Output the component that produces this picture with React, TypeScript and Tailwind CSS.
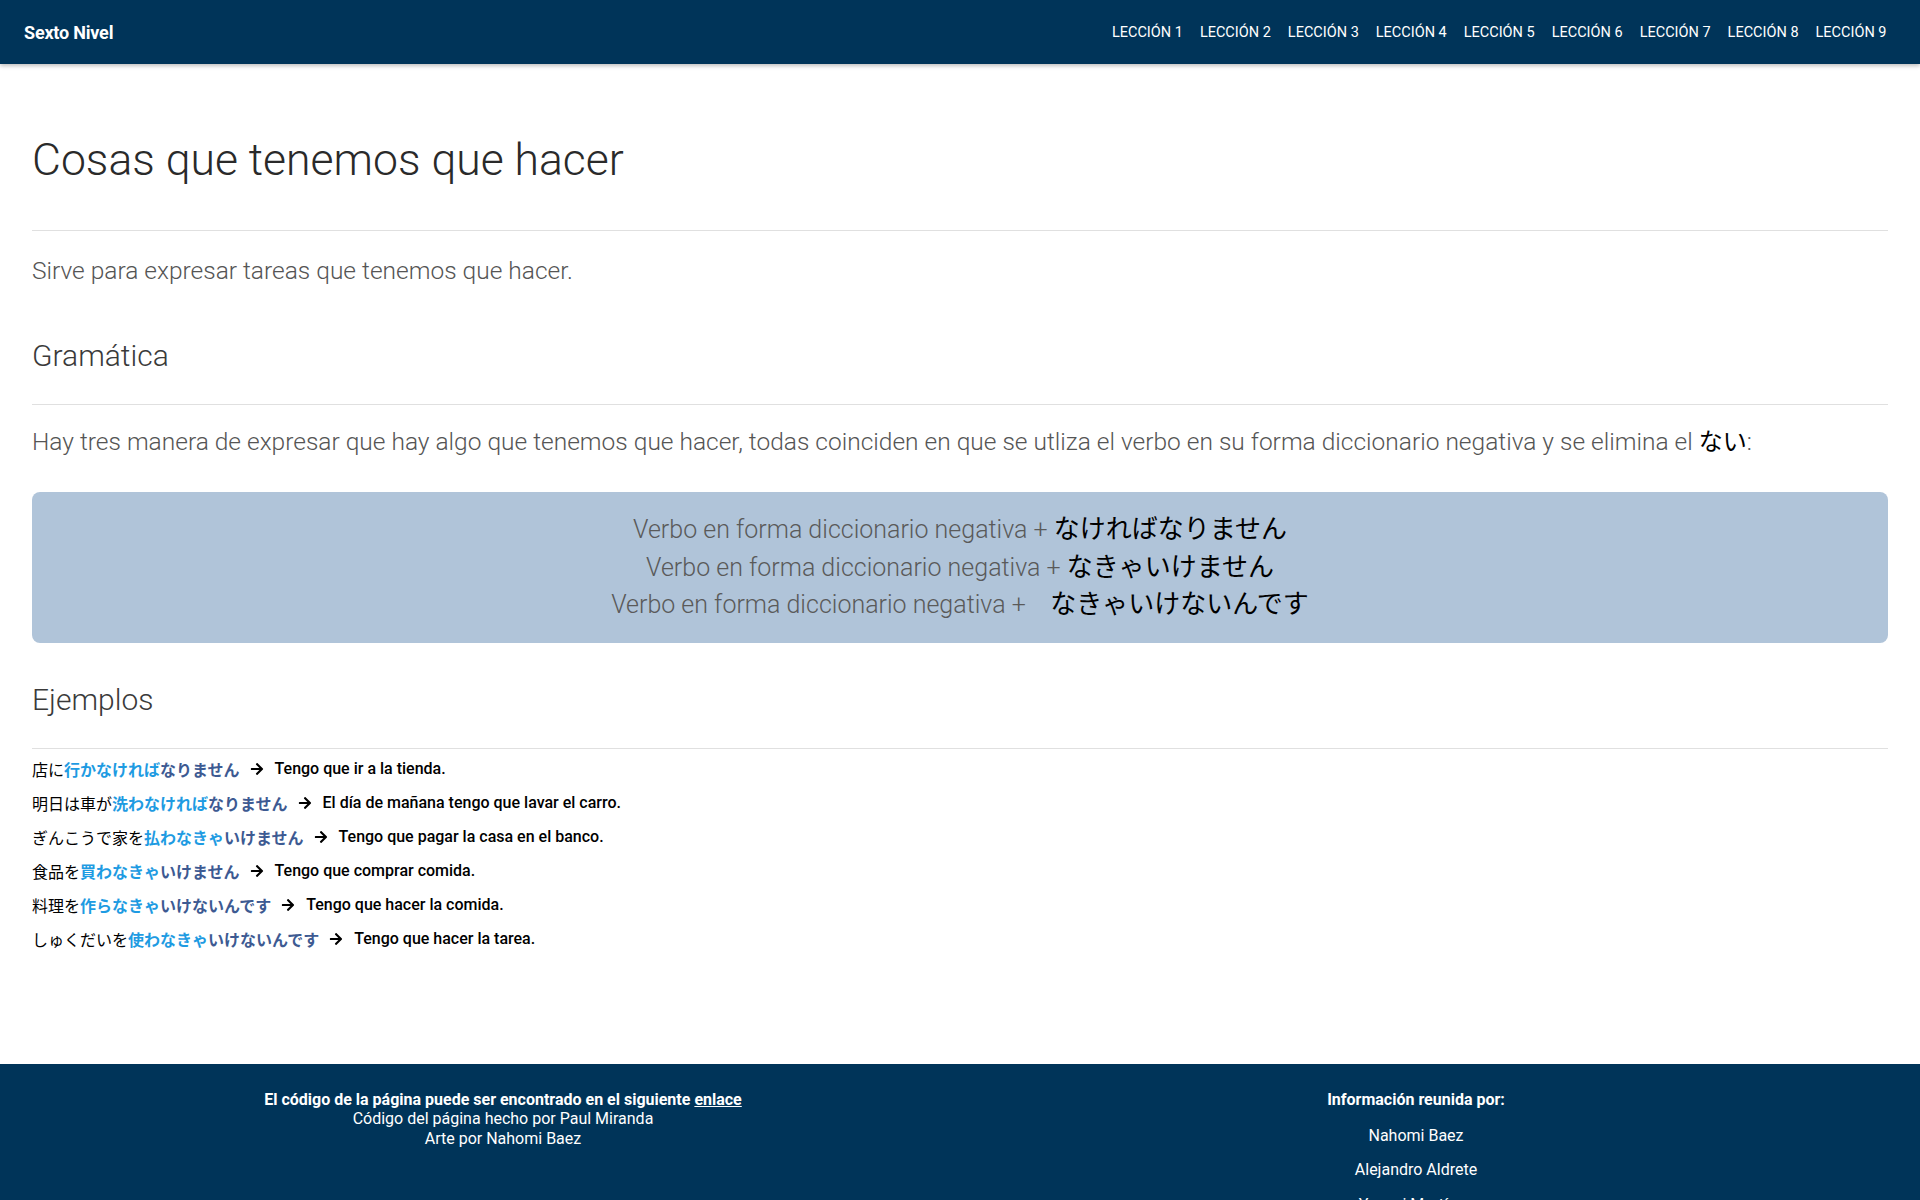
import { FaArrowRight } from "react-icons/fa";

const lecciones = [1, 2, 3, 4, 5, 6, 7, 8, 9];

const ejemplos = [
    { pre: "店に", stem: "行かなければ", end: "なりません", es: "Tengo que ir a la tienda." },
    { pre: "明日は車が", stem: "洗わなければ", end: "なりません", es: "El día de mañana tengo que lavar el carro." },
    { pre: "ぎんこうで家を", stem: "払わなきゃ", end: "いけません", es: "Tengo que pagar la casa en el banco." },
    { pre: "食品を", stem: "買わなきゃ", end: "いけません", es: "Tengo que comprar comida." },
    { pre: "料理を", stem: "作らなきゃ", end: "いけないんです", es: "Tengo que hacer la comida." },
    { pre: "しゅくだいを", stem: "使わなきゃ", end: "いけないんです", es: "Tengo que hacer la tarea." },
];

const jp = "font-['Noto_Sans_CJK_JP',sans-serif]";
const light = "font-['Roboto_Light','Roboto',sans-serif] font-light";

const Navbar = () => (
    <nav className="h-16 bg-[#003459] text-white shadow-[0_2px_4px_rgba(0,0,0,0.25)] flex items-center justify-between pl-6 pr-[25px] relative z-10">
        <a href="#" className="text-[18px] font-bold tracking-[-0.2px]">Sexto Nivel</a>
        <ul className="flex items-center">
            {lecciones.map((n) => (
                <li key={n}>
                    <a href="#" className="px-[8.5px] text-[14.5px]">LECCIÓN {n}</a>
                </li>
            ))}
        </ul>
    </nav>
);

const Footer = () => (
    <footer className="bg-[#003459] text-white mt-[108px] pt-[26px] pb-12">
        <div className="grid grid-cols-[1006px_820px] text-[16px]">
            <div className="text-center leading-[19.5px]">
                <p className="font-bold">
                    El código de la página puede ser encontrado en el siguiente <a href="#" className="underline">enlace</a>
                </p>
                <p>Código del página hecho por Paul Miranda</p>
                <p>Arte por Nahomi Baez</p>
            </div>
            <div className="text-center leading-[19.5px]">
                <p className="font-bold">Información reunida por:</p>
                <ul className="mt-[9px] flex flex-col">
                    {["Nahomi Baez", "Alejandro Aldrete", "Yoseni Martínez", "Paul Miranda"].map((name) => (
                        <li key={name} className="py-[7.5px]">{name}</li>
                    ))}
                </ul>
            </div>
        </div>
    </footer>
);

export default function App() {
    return (
        <div className="min-h-screen bg-white font-['Roboto',sans-serif] text-[rgba(0,0,0,0.87)]">
            <Navbar />

            <main className="px-8">
                <h1 className={`mt-[64px] text-[44.5px] leading-[64px] text-[#2a2a2a] ${light}`}>Cosas que tenemos que hacer</h1>
                <hr className="mt-[38px] border-t border-[#e0e0e0]" />

                <p className={`mt-[24px] text-[24.5px] leading-[32px] text-[#555] ${light}`}>
                    Sirve para expresar tareas que tenemos que hacer.
                </p>

                <h2 className={`mt-[49px] text-[30px] leading-[40px] text-[#3a3a3a] ${light}`}>Gramática</h2>
                <hr className="mt-[28px] border-t border-[#e0e0e0]" />

                <p className={`mt-[21px] text-[24.5px] leading-[32px] text-[#555] ${light}`}>
                    Hay tres manera de expresar que hay algo que tenemos que hacer, todas coinciden en que se utliza el verbo en su forma diccionario negativa y se elimina el{" "}
                    <span className={`${jp} text-[24px] leading-none font-normal text-black`}>ない</span>:
                </p>

                <div className={`mt-[34px] rounded-lg bg-[#b0c4d9] py-[19px] text-center text-[25px] leading-[37.5px] text-[#5a5a5a] ${light}`}>
                    <p>
                        Verbo en forma diccionario negativa + <span className={`${jp} text-[26px] leading-none font-normal text-black`}>なければなりません</span>
                    </p>
                    <p>
                        Verbo en forma diccionario negativa + <span className={`${jp} text-[26px] leading-none font-normal text-black`}>なきゃいけません</span>
                    </p>
                    <p>
                        Verbo en forma diccionario negativa +{"\u00a0\u00a0\u00a0\u00a0"}<span className={`${jp} text-[26px] leading-none font-normal text-black`}>なきゃいけないんです</span>
                    </p>
                </div>

                <h2 className={`mt-[37px] text-[30px] leading-[40px] text-[#3a3a3a] ${light}`}>Ejemplos</h2>
                <hr className="mt-[28px] border-t border-[#e0e0e0]" />

                <ul className="mt-[3px] flex flex-col">
                    {ejemplos.map((e) => (
                        <li key={e.es} className="h-[34px] flex items-center text-[16px]">
                            <span className={`${jp} text-black`}>{e.pre}</span>
                            <span className={`${jp} font-bold text-[#1e9be2]`}>{e.stem}</span>
                            <span className={`${jp} font-bold text-[#3d5a92]`}>{e.end}</span>
                            <FaArrowRight className="ml-[10px] mr-[11px] w-[14px] h-[14px] text-black" />
                            <span className="font-medium text-[16px] text-black">{e.es}</span>
                        </li>
                    ))}
                </ul>
            </main>

            <Footer />
        </div>
    );
}
